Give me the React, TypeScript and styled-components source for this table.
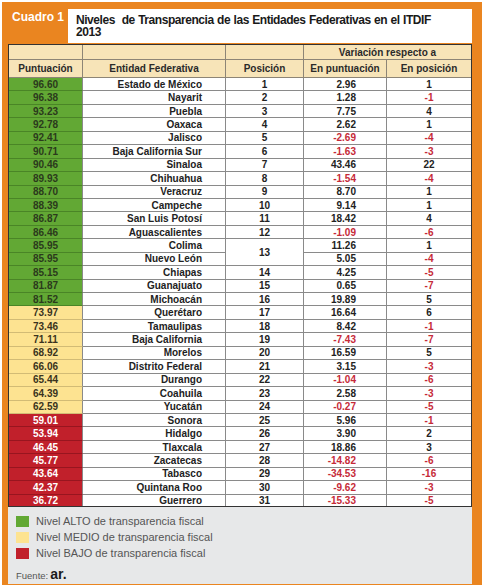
import styled, { createGlobalStyle } from "styled-components";

const GlobalStyle = createGlobalStyle`
    body {
        margin: 0;
        background: #ffffff;
        font-family: "Liberation Sans", Arial, sans-serif;
    }
`;

type Level = "alto" | "medio" | "bajo";

const levelColors: Record<Level, { bg: string; fg: string; line: string }> = {
    alto: { bg: "#62a834", fg: "#2b3a1c", line: "#4a8526" },
    medio: { bg: "#fde391", fg: "#3a3320", line: "#d2bb75" },
    bajo: { bg: "#c1202b", fg: "#ffffff", line: "#98151f" },
};

const Frame = styled.div`
    margin: 2px 0 0 2px;
    width: 480px;
    box-sizing: border-box;
    background: #ea8520;
    padding: 7px 10px 9px 6px;
`;
const TitleBar = styled.div`
    display: flex;
    height: 34px;
    margin-bottom: 1px;
`;
const Label = styled.div`
    width: 60px;
    color: #ffffff;
    font-weight: bold;
    font-size: 12px;
    padding: 1px 0 0 4px;
    box-sizing: border-box;
`;
const TitleBox = styled.div`
    flex: 1;
    background: #ffffff;
    font-weight: bold;
    font-size: 12px;
    line-height: 12px;
    color: #1a1a1a;
    padding: 5px 20px 0 8px;
    letter-spacing: -0.45px;
    word-spacing: 0.5px;
`;
const Grid = styled.div`
    display: grid;
    grid-template-columns: 74px 143px 78px 83px 84px;
    grid-template-rows: 15px 18px repeat(31, 13.45px);
    width: 462px;
    border: 1px solid #333;
    background: #ffffff;
    font-size: 10px;
    font-weight: bold;
    color: #222;
`;
const Cell = styled.div<{
    $align?: "flex-start" | "flex-end" | "center";
    $pad?: number;
    $neg?: boolean;
    $span?: number;
    $last?: boolean;
    $bottom?: boolean;
}>`
    display: flex;
    align-items: center;
    justify-content: ${p => p.$align ?? "center"};
    padding-right: ${p => p.$pad ?? 0}px;
    box-sizing: border-box;
    border-right: ${p => (p.$last ? "none" : "1px solid #8a8a8a")};
    border-bottom: ${p => (p.$bottom ? "none" : "1px solid #8a8a8a")};
    color: ${p => (p.$neg ? "#c62a38" : "#222")};
    grid-row: span ${p => p.$span ?? 1};
    white-space: nowrap;
    line-height: 11px;
`;
const HeadCell = styled(Cell)<{ $cols?: number }>`
    background: #f7e4b8;
    border-color: #8d8576;
    color: #2a2a2a;
    grid-column: span ${p => p.$cols ?? 1};
`;
const ScoreCell = styled(Cell)<{ $level: Level }>`
    background: ${p => levelColors[p.$level].bg};
    color: ${p => levelColors[p.$level].fg};
    border-bottom-color: ${p => levelColors[p.$level].line};
`;
const Legend = styled.div`
    height: 77px;
    box-sizing: border-box;
    background: #e7e8e9;
    padding: 9px 0 0 8px;
    display: flex;
    flex-direction: column;
    gap: 5px;
`;
const LegendItem = styled.div`
    display: flex;
    align-items: center;
    gap: 7px;
    font-size: 11px;
    color: #555;
    height: 11px;
`;
const Swatch = styled.span<{ $level: Level }>`
    width: 13px;
    height: 11px;
    background: ${p => levelColors[p.$level].bg};
`;
const Source = styled.div`
    margin-top: 2px;
    height: 16px;
    font-size: 9.5px;
    color: #555;
    display: flex;
    align-items: baseline;
    gap: 2px;
`;
const Brand = styled.span`
    font-size: 14px;
    font-weight: bold;
    color: #1a1a1a;
`;

type Row = [string, string, number | null, string, string, Level];

const rows: Row[] = [
    ["96.60", "Estado de México", 1, "2.96", "1", "alto"],
    ["96.38", "Nayarit", 2, "1.28", "-1", "alto"],
    ["93.23", "Puebla", 3, "7.75", "4", "alto"],
    ["92.78", "Oaxaca", 4, "2.62", "1", "alto"],
    ["92.41", "Jalisco", 5, "-2.69", "-4", "alto"],
    ["90.71", "Baja California Sur", 6, "-1.63", "-3", "alto"],
    ["90.46", "Sinaloa", 7, "43.46", "22", "alto"],
    ["89.93", "Chihuahua", 8, "-1.54", "-4", "alto"],
    ["88.70", "Veracruz", 9, "8.70", "1", "alto"],
    ["88.39", "Campeche", 10, "9.14", "1", "alto"],
    ["86.87", "San Luis Potosí", 11, "18.42", "4", "alto"],
    ["86.46", "Aguascalientes", 12, "-1.09", "-6", "alto"],
    ["85.95", "Colima", 13, "11.26", "1", "alto"],
    ["85.95", "Nuevo León", null, "5.05", "-4", "alto"],
    ["85.15", "Chiapas", 14, "4.25", "-5", "alto"],
    ["81.87", "Guanajuato", 15, "0.65", "-7", "alto"],
    ["81.52", "Michoacán", 16, "19.89", "5", "alto"],
    ["73.97", "Querétaro", 17, "16.64", "6", "medio"],
    ["73.46", "Tamaulipas", 18, "8.42", "-1", "medio"],
    ["71.11", "Baja California", 19, "-7.43", "-7", "medio"],
    ["68.92", "Morelos", 20, "16.59", "5", "medio"],
    ["66.06", "Distrito Federal", 21, "3.15", "-3", "medio"],
    ["65.44", "Durango", 22, "-1.04", "-6", "medio"],
    ["64.39", "Coahuila", 23, "2.58", "-3", "medio"],
    ["62.59", "Yucatán", 24, "-0.27", "-5", "medio"],
    ["59.01", "Sonora", 25, "5.96", "-1", "bajo"],
    ["53.94", "Hidalgo", 26, "3.90", "2", "bajo"],
    ["46.45", "Tlaxcala", 27, "18.86", "3", "bajo"],
    ["45.77", "Zacatecas", 28, "-14.82", "-6", "bajo"],
    ["43.64", "Tabasco", 29, "-34.53", "-16", "bajo"],
    ["42.37", "Quintana Roo", 30, "-9.62", "-3", "bajo"],
    ["36.72", "Guerrero", 31, "-15.33", "-5", "bajo"],
];

function App() {
    return (
        <>
            <GlobalStyle />
            <Frame>
                <TitleBar>
                    <Label>Cuadro 1</Label>
                    <TitleBox>Niveles&nbsp; de Transparencia de las Entidades Federativas en el ITDIF 2013</TitleBox>
                </TitleBar>
                <Grid>
                    <HeadCell />
                    <HeadCell />
                    <HeadCell />
                    <HeadCell $cols={2} $last>Variación respecto a</HeadCell>
                    <HeadCell>Puntuación</HeadCell>
                    <HeadCell>Entidad Federativa</HeadCell>
                    <HeadCell>Posición</HeadCell>
                    <HeadCell>En puntuación</HeadCell>
                    <HeadCell $last>En posición</HeadCell>
                    {rows.map(([score, name, pos, dScore, dPos, level], i) => {
                        const bottom = i === rows.length - 1;
                        return [
                            <ScoreCell key={name + "s"} $level={level} $bottom={bottom}>{score}</ScoreCell>,
                            <Cell key={name + "n"} $align="flex-end" $pad={23} $bottom={bottom}>{name}</Cell>,
                            pos !== null && (
                                <Cell key={name + "p"} $span={pos === 13 ? 2 : 1} $bottom={bottom}>{pos}</Cell>
                            ),
                            <Cell key={name + "d"} $align="flex-end" $pad={30} $neg={dScore.startsWith("-")} $bottom={bottom}>{dScore}</Cell>,
                            <Cell key={name + "q"} $neg={dPos.startsWith("-")} $last $bottom={bottom}>{dPos}</Cell>,
                        ];
                    })}
                </Grid>
                <Legend>
                    <LegendItem><Swatch $level="alto" />Nivel ALTO de transparencia fiscal</LegendItem>
                    <LegendItem><Swatch $level="medio" />Nivel MEDIO de transparencia fiscal</LegendItem>
                    <LegendItem><Swatch $level="bajo" />Nivel BAJO de transparencia fiscal</LegendItem>
                    <Source>Fuente: <Brand>ar.</Brand></Source>
                </Legend>
            </Frame>
        </>
    );
}
export default App;
